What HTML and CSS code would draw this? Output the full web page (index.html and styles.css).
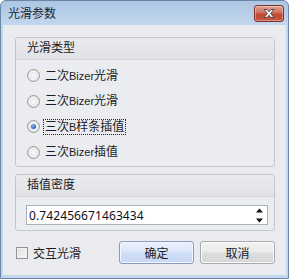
FILE: index.html
```html
<!doctype html>
<html lang="zh">
    <head>
        <meta charset="utf-8">
        <title>光滑参数</title>
        <link rel="stylesheet" href="styles.css">
    </head>
    <body>
        <div class="window">
            <div class="titlebar">
                <span class="title">光滑参数</span>
                <span class="close">
                    <svg width="14" height="11" viewBox="0 0 14 11">
                        <path d="M2 1.5h3l2 2.3 2-2.3h3l-3.5 4 3.5 4h-3l-2-2.3-2 2.3h-3l3.5-4z" fill="#fff" stroke="#4a4a4a" stroke-width="1" stroke-linejoin="round"/>
                    </svg>
                </span>
            </div>
            <div class="client">
                <div class="group">
                    <div class="group-head">光滑类型</div>
                    <div class="group-body radios">
                        <label class="radio"><i></i><span>二次<b>Bizer</b>光滑</span></label>
                        <label class="radio"><i></i><span>三次<b>Bizer</b>光滑</span></label>
                        <label class="radio checked"><i></i><span class="focus">三次<b>B</b>样条插值</span></label>
                        <label class="radio"><i></i><span>三次<b>Bizer</b>插值</span></label>
                    </div>
                </div>
                <div class="group">
                    <div class="group-head">插值密度</div>
                    <div class="group-body spin-wrap">
                        <div class="spin">
                            <span class="value">0.742456671463434</span>
                            <span class="arrows">
                                <svg width="7" height="15" viewBox="0 0 7 15">
                                    <path d="M3.5 0.5L7 4.5H0z" fill="#111"/>
                                    <path d="M0 10.5h7L3.5 14.5z" fill="#111"/>
                                </svg>
                            </span>
                        </div>
                    </div>
                </div>
                <div class="footer">
                    <label class="check"><i></i>交互光滑</label>
                    <button class="btn default">确定</button>
                    <button class="btn">取消</button>
                </div>
            </div>
        </div>
    </body>
</html>
```

FILE: styles.css
```css
html, body { margin: 0; padding: 0; }
body { font-family: "Liberation Sans", "Noto Sans CJK SC", sans-serif; font-size: 12px; color: #1c1c24; background: #fff; }

.window {
    width: 289px; height: 279px; box-sizing: border-box;
    display: flex; flex-direction: column;
    border: 1px solid #6a86a6; border-radius: 6px 6px 0 0;
    background: linear-gradient(#adc6e3, #c2d7ed 24px, #c2d7ed);
}

/*title bar*/
.titlebar { height: 24px; display: flex; align-items: center; padding: 0 4px 0 7px; }
.titlebar .title { flex: 1; color: #1a2533; line-height: 16px; padding-top: 2px; }
.close {
    width: 28px; height: 15px; margin-top: 0;
    display: flex; align-items: center; justify-content: center;
    border: 1px solid #7d3128; border-radius: 3px;
    background: linear-gradient(#e2a193, #d0705f 45%, #c24733 55%, #c9563f);
    box-shadow: inset 0 0 0 1px rgba(255,255,255,0.35);
}

/*client area*/
.client {
    flex: 1; margin: 0 2px 3px 2px;
    background: #e9ebef;
    padding: 12px 11px 0 12px;
    display: flex; flex-direction: column;
}
.group { border: 1px solid #c5c7cc; border-radius: 3px; background: #eaecf0; }
.group + .group { margin-top: 7px; }
.group-head {
    height: 21px; line-height: 21px; padding-left: 11px;
    border-bottom: 1px solid #d3d5d9;
    background: linear-gradient(#e9eaee, #e0e2e6);
    border-radius: 2px 2px 0 0;
}

/*radios*/
.radios { padding: 3px 0 1px 11px; }
.radio { height: 25.5px; display: flex; align-items: center; }
.radio i {
    width: 11px; height: 11px; border-radius: 50%; margin-right: 3px;
    border: 1px solid #9a9ca0;
    background: radial-gradient(circle, #f6f6f6 0 2px, #e4e4e4 3px, #f8f8f8 4px);
    box-shadow: inset 0 0 0 1px #dcdcdc;
    position: relative;
}
.radio.checked i::after {
    content: ""; position: absolute; left: 3px; top: 3px; width: 5px; height: 5px; border-radius: 50%;
    background: radial-gradient(circle at 40% 35%, #8fb4ee, #2a60c4 70%, #1d4aa0);
}
.radio span { line-height: 14px; padding: 0 1px 0 1px; border: 1px solid transparent; }
.radio span.focus { border: 1px dotted #222; }
.radio b { font-weight: normal; font-size: 11px; }

/*spin edit*/
.spin-wrap { padding: 8px 6px 5px 10px; }
.spin {
    height: 18px; display: flex; align-items: center;
    border: 1px solid #a9b0ba; background: #fff;
}
.spin .value { flex: 1; padding-left: 2px; color: #101018; font-family: "Noto Sans", sans-serif; letter-spacing: 0.1px; }
.spin .arrows { width: 12px; display: flex; justify-content: center; padding-right: 2px; }

/*footer*/
.footer { display: flex; align-items: center; gap: 6px; margin-top: 10px; padding-left: 1px; }
.check { display: flex; align-items: center; flex: 1; }
.check i {
    width: 10px; height: 10px; margin-right: 5px;
    border: 1px solid #8f9194;
    background: linear-gradient(135deg, #dcdcdc, #f7f7f7);
    box-shadow: inset 0 0 0 1px #f4f4f4;
}
.btn {
    width: 75px; height: 23px; padding: 0;
    font: inherit; color: #1c1c24;
    border: 1px solid #a6abb3; border-radius: 3px;
    background: linear-gradient(#f2f2f2, #ebebeb 45%, #dddddd 55%, #d6d6d6);
    box-shadow: inset 0 0 0 1px #fbfbfb;
}
.btn.default {
    border-color: #8a9bbb;
    background: linear-gradient(#eaf0fc, #dde7fa 45%, #cedcf7 55%, #c8d7f5);
    box-shadow: inset 0 0 0 1px #f3f7ff;
}
```
